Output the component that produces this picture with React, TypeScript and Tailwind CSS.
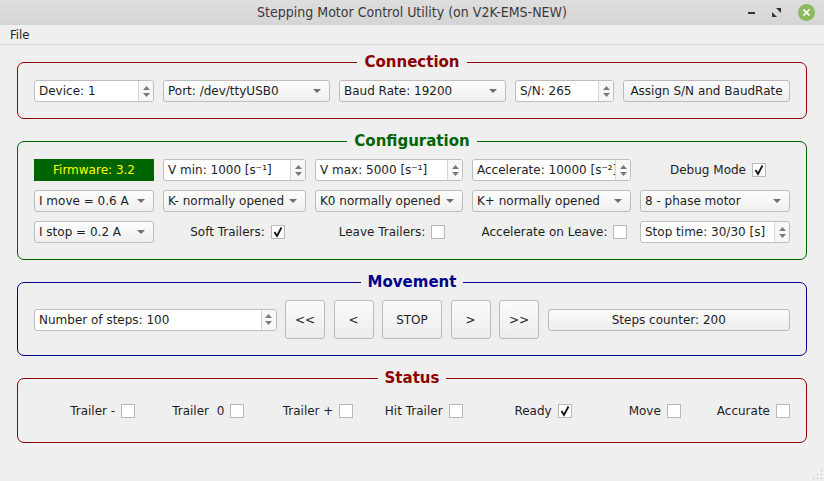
import React from "react"

const ui = "font-['DejaVu_Sans',sans-serif] text-[12px] text-[#1e1e1e]"

function Arrows() {
  return (
    <div className="flex w-[15px] flex-col items-center justify-center gap-[3px] border-l border-[#d4d4d4] bg-[#f7f7f7]">
      <svg width="7" height="4" viewBox="0 0 7 4">
        <path d="M0 4 L3.5 0 L7 4 Z" fill="#7a7a7a" />
      </svg>
      <svg width="7" height="4" viewBox="0 0 7 4">
        <path d="M0 0 L3.5 4 L7 0 Z" fill="#7a7a7a" />
      </svg>
    </div>
  )
}

function SpinBox({ text, className = "" }: { text: string; className?: string }) {
  return (
    <div className={`flex h-[22px] overflow-hidden rounded-[3px] border border-[#bdbdbd] bg-white ${className}`}>
      <span className="flex-1 self-center overflow-hidden whitespace-nowrap pl-[4px] leading-none">{text}</span>
      <Arrows />
    </div>
  )
}

function Combo({ text, className = "" }: { text: string; className?: string }) {
  return (
    <div
      className={`flex h-[22px] items-center rounded-[3px] border border-[#bdbdbd] bg-gradient-to-b from-[#fdfdfd] to-[#efefef] pl-[4px] pr-[8px] ${className}`}
    >
      <span className="flex-1 whitespace-nowrap">{text}</span>
      <svg width="8" height="4" viewBox="0 0 8 4">
        <path d="M0 0 L4 4 L8 0 Z" fill="#6e6e6e" />
      </svg>
    </div>
  )
}

function Button({ text, className = "" }: { text: string; className?: string }) {
  return (
    <div
      className={`flex items-center justify-center rounded-[3px] border border-[#bababa] bg-gradient-to-b from-[#fbfbfb] to-[#ededed] whitespace-nowrap ${className}`}
    >
      {text}
    </div>
  )
}

function Check({ checked = false }: { checked?: boolean }) {
  return (
    <div className="flex h-[14px] w-[14px] shrink-0 items-center justify-center border border-[#b8b8b8] bg-white">
      {checked && (
        <svg width="12" height="12" viewBox="0 0 12 12">
          <path d="M2.5 6 L5 10 L9.5 1.5" fill="none" stroke="#111" strokeWidth="1.8" />
        </svg>
      )}
    </div>
  )
}

function CheckItem({ label, checked, className = "" }: { label: string; checked?: boolean; className?: string }) {
  return (
    <div className={`flex items-center gap-[6px] whitespace-pre ${className}`}>
      <span>{label}</span>
      <Check checked={checked} />
    </div>
  )
}

function Group({
  title,
  boxClass,
  titleClass,
  children,
}: {
  title: string
  boxClass: string
  titleClass: string
  children: React.ReactNode
}) {
  return (
    <fieldset className={`rounded-[7px] border px-4 pb-4 ${boxClass}`}>
      <legend className={`mx-auto px-[7px] text-[15px] font-bold leading-[18px] ${titleClass}`}>{title}</legend>
      <div className="pt-[9px]">{children}</div>
    </fieldset>
  )
}

export default function App() {
  return (
    <div className={`flex h-[481px] w-[824px] flex-col overflow-hidden bg-[#efefef] ${ui}`}>
      {/* window title bar */}
      <div className="flex h-[25px] items-center bg-gradient-to-b from-[#dedede] to-[#d5d5d5] font-['DejaVu_Sans_Condensed',sans-serif] text-[14px] text-[#3a3a3a]">
        <div className="w-[90px]" />
        <div className="flex-1 text-center">Stepping Motor Control Utility (on V2K-EMS-NEW)</div>
        <div className="flex w-[90px] items-center justify-end gap-[17px] pr-[9px]">
          <div className="h-[2px] w-[7px] bg-[#333]" />
          <svg width="9" height="9" viewBox="0 0 9 9">
            <path d="M4 0 H9 V5 Z" fill="#333" />
            <path d="M0 4 V9 H5 Z" fill="#333" />
          </svg>
          <div className="flex h-[17px] w-[17px] items-center justify-center rounded-full bg-[#8bbb5e]">
            <svg width="7" height="7" viewBox="0 0 7 7">
              <path d="M0.5 0.5 L6.5 6.5 M6.5 0.5 L0.5 6.5" stroke="#fff" strokeWidth="1.6" />
            </svg>
          </div>
        </div>
      </div>

      {/* menu bar */}
      <div className="flex h-[20px] items-center border-b border-[#d9d9d9] px-[10px] font-['DejaVu_Sans_Condensed',sans-serif] text-[13px]">
        File
      </div>

      <div className="flex flex-col gap-[13px] px-[17px] pt-[8px]">
        <Group title="Connection" boxClass="border-[#8b0000]" titleClass="text-[#8b0000]">
          <div className="flex gap-[9px]">
            <SpinBox text="Device: 1" className="w-[120px]" />
            <Combo text="Port: /dev/ttyUSB0" className="w-[167px]" />
            <Combo text="Baud Rate: 19200" className="w-[167px]" />
            <SpinBox text="S/N: 265" className="w-[99px]" />
            <Button text="Assign S/N and BaudRate" className="h-[22px] flex-1" />
          </div>
        </Group>

        <Group title="Configuration" boxClass="border-[#006400]" titleClass="text-[#006400]">
          <div className="grid grid-cols-[120px_143px_148px_159px_1fr] gap-x-[9px] gap-y-[9px] [&>*]:h-[22px]">
            <div className="flex items-center justify-center bg-[#006400] text-[#ffff00]">Firmware: 3.2</div>
            <SpinBox text="V min: 1000 [s⁻¹]" />
            <SpinBox text="V max: 5000 [s⁻¹]" />
            <SpinBox text="Accelerate: 10000 [s⁻²]" />
            <CheckItem label="Debug Mode" checked className="justify-center pl-[6px]" />

            <Combo text="I move = 0.6 A" />
            <Combo text="K- normally opened" />
            <Combo text="K0 normally opened" />
            <Combo text="K+ normally opened" />
            <Combo text="8 - phase motor" />

            <Combo text="I stop = 0.2 A" />
            <CheckItem label="Soft Trailers:" checked className="justify-center pl-[6px]" />
            <CheckItem label="Leave Trailers:" className="justify-center pl-[6px]" />
            <CheckItem label="Accelerate on Leave:" className="justify-center pl-[6px]" />
            <SpinBox text="Stop time: 30/30 [s]" />
          </div>
        </Group>

        <Group title="Movement" boxClass="border-[#00008b]" titleClass="text-[#00008b]">
          <div className="flex items-center gap-[8.5px]">
            <SpinBox text="Number of steps: 100" className="flex-1" />
            <Button text="<<" className="h-[39px] w-[40px]" />
            <Button text="<" className="h-[39px] w-[40px]" />
            <Button text="STOP" className="h-[39px] w-[60px]" />
            <Button text=">" className="h-[39px] w-[40px]" />
            <Button text=">>" className="h-[39px] w-[40px]" />
            <Button text="Steps counter: 200" className="h-[22px] flex-1" />
          </div>
        </Group>

        <Group title="Status" boxClass="border-[#8b0000]" titleClass="text-[#8b0000]">
          <div className="grid h-[30px] grid-cols-7 items-center gap-x-2">
            <CheckItem label="Trailer -" className="justify-end" />
            <CheckItem label="Trailer  0" className="justify-end" />
            <CheckItem label="Trailer +" className="justify-end" />
            <CheckItem label="Hit Trailer" className="justify-end" />
            <CheckItem label="Ready" checked className="justify-end" />
            <CheckItem label="Move" className="justify-end" />
            <CheckItem label="Accurate" className="justify-end" />
          </div>
        </Group>
      </div>

      {/* size grip */}
      <div className="mt-auto flex justify-end pb-[1px] pr-[1px]">
        <svg width="11" height="11" viewBox="0 0 11 11">
          {[
            [9, 1],
            [9, 5],
            [5, 5],
            [9, 9],
            [5, 9],
            [1, 9],
          ].map(([x, y]) => (
            <rect key={`${x}-${y}`} x={x} y={y} width="1" height="1" fill="#b0b0b0" />
          ))}
        </svg>
      </div>
    </div>
  )
}
